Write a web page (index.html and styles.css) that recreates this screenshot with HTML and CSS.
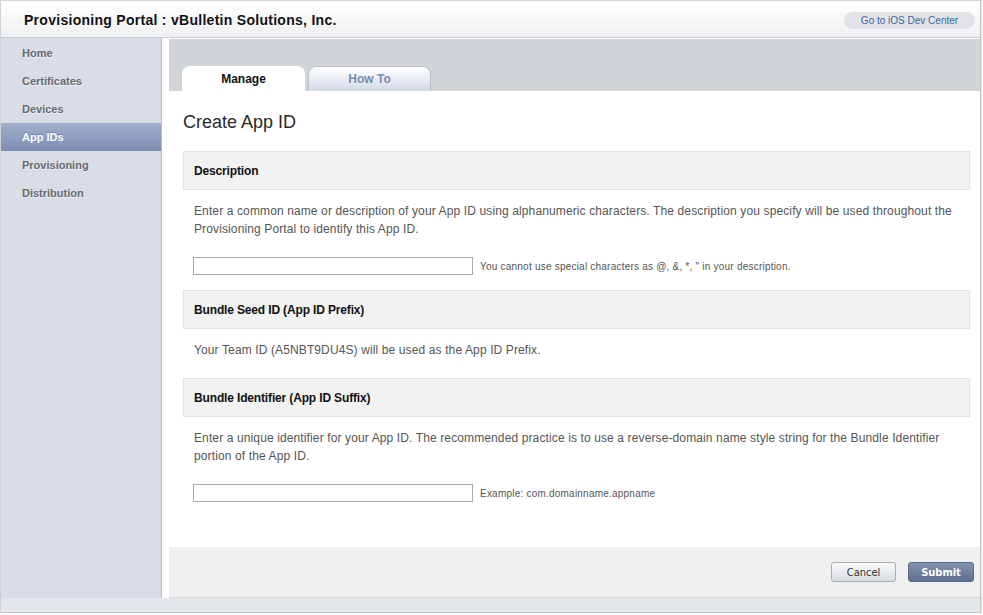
FILE: index.html
```html
<!DOCTYPE html>
<html>
<head>
<meta charset="utf-8">
<title>Provisioning Portal</title>
<link rel="stylesheet" href="styles.css">
</head>
<body>
<div class="wrap">
  <header class="topbar">
    <h1 class="title">Provisioning Portal : vBulletin Solutions, Inc.</h1>
    <a class="devcenter" href="#">Go to iOS Dev Center</a>
  </header>
  <div class="body">
    <nav class="sidebar">
      <a class="nav-item" href="#">Home</a>
      <a class="nav-item" href="#">Certificates</a>
      <a class="nav-item" href="#">Devices</a>
      <a class="nav-item active" href="#">App IDs</a>
      <a class="nav-item" href="#">Provisioning</a>
      <a class="nav-item" href="#">Distribution</a>
    </nav>
    <main class="main">
      <div class="tabbar">
        <a class="tab tab-active" href="#">Manage</a>
        <a class="tab tab-inactive" href="#">How To</a>
      </div>
      <div class="content">
        <h2 class="page-title">Create App ID</h2>
        <div class="section-head">Description</div>
        <p class="text">Enter a common name or description of your App ID using alphanumeric characters. The description you specify will be used throughout the Provisioning Portal to identify this App ID.</p>
        <div class="field-row">
          <input class="field" type="text">
          <span class="hint">You cannot use special characters as @, &amp;, *, " in your description.</span>
        </div>
        <div class="section-head">Bundle Seed ID (App ID Prefix)</div>
        <p class="text">Your Team ID (A5NBT9DU4S) will be used as the App ID Prefix.</p>
        <div class="section-head">Bundle Identifier (App ID Suffix)</div>
        <p class="text">Enter a unique identifier for your App ID. The recommended practice is to use a reverse-domain name style string for the Bundle Identifier portion of the App ID.</p>
        <div class="field-row">
          <input class="field" type="text">
          <span class="hint">Example: com.domainname.appname</span>
        </div>
      </div>
      <div class="footer">
        <button class="btn btn-cancel" type="button">Cancel</button>
        <button class="btn btn-submit" type="button">Submit</button>
      </div>
    </main>
  </div>
  <div class="bottom-strip"></div>
</div>
</body>
</html>
```
FILE: styles.css
```css
html, body {
  margin: 0;
  padding: 0;
  background: #ffffff;
}
body {
  font-family: "Liberation Sans", Arial, Helvetica, sans-serif;
  color: #333;
}
.wrap {
  width: 979px;
  border: 1px solid #cfd1d4;
  border-bottom: none;
  border-right: 1px solid #c2c5ca;
  box-shadow: 1px 0 1px #e2e4e7;
}
.topbar {
  height: 36px;
  border-bottom: 1px solid #c9ccd1;
  background: linear-gradient(#ffffff, #eef0f2);
  display: flex;
  align-items: center;
  justify-content: space-between;
  padding: 0 5px 0 23px;
}
.title {
  margin: 0;
  font-size: 14px;
  font-weight: bold;
  color: #111;
  text-shadow: 0 1px 0 #fff;
  letter-spacing: 0.28px;
  position: relative;
  top: 1px;
}
.devcenter {
  display: flex;
  align-items: center;
  justify-content: center;
  width: 131px;
  height: 17px;
  border-radius: 9px;
  background: #e1e3e6;
  color: #3b66a2;
  font-size: 10px;
  text-decoration: none;
  position: relative;
  top: 1px;
}
.body {
  display: flex;
}
.sidebar {
  width: 160px;
  border-right: 1px solid #b6bdcb;
  background: #d9dde6;
  display: flex;
  flex-direction: column;
  padding-top: 1px;
}
.nav-item {
  display: flex;
  align-items: center;
  height: 28px;
  padding-left: 21px;
  font-size: 11px;
  font-weight: bold;
  color: #666a70;
  text-decoration: none;
  text-shadow: 0 1px 0 #eef0f4;
}
.nav-item.active {
  background: linear-gradient(#a2b0cc, #7d8db2);
  color: #ffffff;
  text-shadow: 0 -1px 0 #6f7fa3;
}
.main {
  flex: 1;
  padding: 1px 0 0 7px;
  display: flex;
  flex-direction: column;
}
.tabbar {
  height: 52px;
  background: #d2d5d8;
  display: flex;
  align-items: flex-end;
  gap: 3px;
  padding-left: 13px;
}
.tab {
  width: 123px;
  height: 25px;
  box-sizing: border-box;
  border-radius: 8px 8px 0 0;
  display: flex;
  align-items: center;
  justify-content: center;
  font-size: 12px;
  font-weight: bold;
  text-decoration: none;
}
.tab-active {
  background: #ffffff;
  color: #111;
}
.tab-inactive {
  background: linear-gradient(#ffffff, #d3d9e7);
  border: 1px solid #bcc0c7;
  border-bottom: none;
  color: #7a8cae;
}
.content {
  background: #fff;
  padding: 20px 10px 30px 14px;
}
.page-title {
  margin: 0 0 18px 0;
  font-size: 18px;
  line-height: 22px;
  font-weight: normal;
  color: #2a2a2a;
}
.section-head {
  height: 37px;
  border: 1px solid #e3e3e3;
  background: #f2f2f2;
  display: flex;
  align-items: center;
  padding-left: 10px;
  font-size: 12px;
  font-weight: bold;
  color: #111;
  letter-spacing: -0.15px;
}
.text {
  margin: 12px 0 19px 11px;
  font-size: 12px;
  line-height: 18px;
  color: #555;
  letter-spacing: 0.12px;
}
.field-row {
  display: flex;
  align-items: center;
  gap: 7px;
  margin: 0 0 15px 10px;
}
.field {
  width: 280px;
  height: 18px;
  box-sizing: border-box;
  border: 1px solid #a9a9a9;
  margin: 0;
  padding: 0;
  background: #fff;
}
.hint {
  font-size: 10px;
  color: #555;
  letter-spacing: 0.22px;
}
.footer {
  height: 50px;
  background: #f0f0f0;
  display: flex;
  align-items: center;
  justify-content: flex-end;
  gap: 12px;
  padding-right: 6px;
  border-bottom: 1px solid #d5d7da;
}
.btn {
  height: 20px;
  border-radius: 3px;
  font-family: "DejaVu Sans Condensed", "DejaVu Sans", sans-serif;
  font-stretch: condensed;
  font-size: 11px;
  padding: 0;
  cursor: pointer;
}
.btn-cancel {
  width: 65px;
  border: 1px solid #a7abb2;
  background: linear-gradient(#fbfbfc, #d8dce4);
  color: #333;
}
.btn-submit {
  width: 66px;
  border: 1px solid #5d6d89;
  background: linear-gradient(#8292ad, #5f7090);
  color: #fff;
  font-weight: bold;
}
.bottom-strip {
  height: 14px;
  background: #e3e6ea;
  border-bottom: 1px solid #c6c9ce;
}
```
